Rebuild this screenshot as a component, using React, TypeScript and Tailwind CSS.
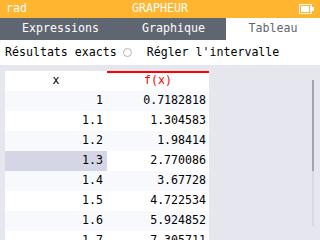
import React from 'react';

const rows = [
  { x: '1', y: '0.7182818' },
  { x: '1.1', y: '1.304583' },
  { x: '1.2', y: '1.98414' },
  { x: '1.3', y: '2.770086' },
  { x: '1.4', y: '3.67728' },
  { x: '1.5', y: '4.722534' },
  { x: '1.6', y: '5.924852' },
  { x: '1.7', y: '7.305711' },
];

const Battery = () => (
  <svg width="16" height="10" viewBox="0 0 16 10" className="block">
    <rect x="0.5" y="0.5" width="12" height="9" fill="none" stroke="white" />
    <rect x="2" y="2" width="8" height="6" fill="white" />
    <rect x="11" y="2" width="1" height="6" fill="white" />
    <rect x="13" y="3" width="2" height="4" fill="white" />
  </svg>
);

export default function App() {
  return (
    <div
      className="w-[320px] h-[240px] overflow-hidden bg-[#E5E6EE] text-[11.6px] leading-none"
      style={{ fontFamily: '"DejaVu Sans Mono", "Liberation Mono", monospace' }}
    >
      {/* title bar */}
      <div className="h-[18px] bg-[#FFB530] text-white grid grid-cols-[1fr_auto_1fr] items-center">
        <span className="pl-[6px]">rad</span>
        <span>GRAPHEUR</span>
        <div className="flex justify-end pr-[5px]">
          <Battery />
        </div>
      </div>

      {/* tabs */}
      <div className="h-[22px] flex bg-[#5F6571]">
        <div className="w-[121px] flex items-center justify-center text-white">Expressions</div>
        <div className="w-[105px] flex items-center justify-center text-white">Graphique</div>
        <div className="flex-1 flex items-center justify-center bg-white text-[#5F6571]">Tableau</div>
      </div>

      {/* options */}
      <div className="h-[25px] bg-white flex items-center pl-[5px] text-black">
        <span>Résultats exacts</span>
        <span className="ml-[6px] w-[9px] h-[9px] rounded-full border border-[#B4B4B8]" />
        <span className="ml-[15px]">Régler l'intervalle</span>
      </div>

      {/* table */}
      <div className="flex pt-[6px] pl-[5px]">
        <div className="w-[204px]">
          <div className="flex h-[20px] bg-white">
            <div className="w-[102px] flex items-center justify-center text-black">x</div>
            <div className="w-[102px] border-t-2 border-[#FF0000] flex items-center justify-center text-[#FF0000] pb-[2px]">
              f(x)
            </div>
          </div>
          {rows.map((r, i) => {
            const light = i % 2 === 0;
            const rowBg = light ? 'bg-[#F7F9FD]' : 'bg-white';
            return (
              <div key={r.x} className={`flex h-[20px] ${rowBg}`}>
                <div
                  className={`w-[102px] flex items-center justify-end pr-[4px] text-black ${
                    i === 3 ? 'bg-[#D4D6E5]' : ''
                  }`}
                >
                  {r.x}
                </div>
                <div className="w-[102px] flex items-center justify-end pr-[3px] text-black">{r.y}</div>
              </div>
            );
          })}
        </div>
        <div className="flex-1 flex justify-end pr-[6px]">
          <div className="mt-[9px] w-[2px] flex flex-col">
            <div className="h-[91px] bg-[#A3A3AC]" />
            <div className="h-[55px] bg-[#D8D8E0]" />
          </div>
        </div>
      </div>
    </div>
  );
}
